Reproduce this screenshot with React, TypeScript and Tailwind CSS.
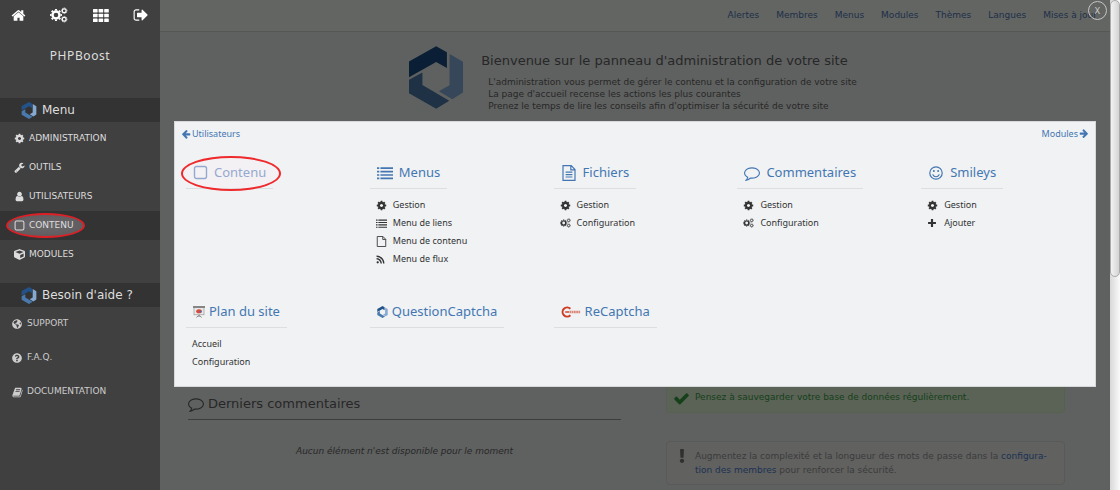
import type { ReactNode } from 'react';
import { FaCube, FaExclamation, FaGlobeAmericas, FaQuestionCircle, FaRss } from 'react-icons/fa';

type IconProps = { className?: string };

const solid = (d: string) =>
  function SolidIcon({ className = '' }: IconProps) {
    return (
      <svg viewBox="0 0 1792 1792" fill="currentColor" aria-hidden="true" className={`shrink-0 ${className}`}>
        <path d={d} />
      </svg>
    );
  };

const Home = solid(
  'M1472 992v480q0 26-19 45t-45 19h-384v-384h-256v384h-384q-26 0-45-19t-19-45v-480q0-1 .5-3t.5-3l575-474 575 474q1 2 1 6zm223-69l-62 74q-8 9-21 11h-3q-13 0-21-7l-692-577-692 577q-12 8-24 7-13-2-21-11l-62-74q-8-10-7-23.5t11-21.5l719-599q32-26 76-26t76 26l244 204v-195q0-14 9-23t23-9h192q14 0 23 9t9 23v408l219 182q10 8 11 21.5t-7 23.5z',
);
const Cog = solid(
  'M1152 896q0-106-75-181t-181-75-181 75-75 181 75 181 181 75 181-75 75-181zm512-109v222q0 12-8 23t-20 13l-185 28q-19 54-39 91 35 50 107 138 10 12 10 25t-9 23q-27 37-99 108t-94 71q-12 0-26-9l-138-108q-44 23-91 38-16 136-29 186-7 28-36 28h-222q-14 0-24.5-8.5t-11.5-21.5l-28-184q-49-16-90-37l-141 107q-10 9-25 9-14 0-25-11-126-114-165-168-7-10-7-23 0-12 8-23 15-21 51-66.5t54-70.5q-27-50-41-99l-183-27q-13-2-21-12.5t-8-23.5v-222q0-12 8-23t19-13l186-28q14-46 39-92-40-57-107-138-10-12-10-24 0-10 9-23 26-36 98.5-107.5t94.5-71.5q13 0 26 10l138 107q44-23 91-38 16-136 29-186 7-28 36-28h222q14 0 24.5 8.5t11.5 21.5l28 184q49 16 90 37l142-107q9-9 24-9 13 0 25 10 129 119 165 170 7 8 7 22 0 12-8 23-15 21-51 66.5t-54 70.5q26 50 41 98l183 28q13 2 21 12.5t8 23.5z',
);
const SignOut = solid(
  'M704 1440q0 4 1 20t.5 26.5-3 23.5-10 19.5-20.5 6.5h-320q-119 0-203.5-84.5t-84.5-203.5v-704q0-119 84.5-203.5t203.5-84.5h320q13 0 22.5 9.5t9.5 22.5q0 4 1 20t.5 26.5-3 23.5-10 19.5-20.5 6.5h-320q-66 0-113 47t-47 113v704q0 66 47 113t113 47h312l11.5 1 11.5 3 8 5.5 7 9 2 13.5zm928-544q0 26-19 45l-544 544q-19 19-45 19t-45-19-19-45v-288h-448q-26 0-45-19t-19-45v-384q0-26 19-45t45-19h448v-288q0-26 19-45t45-19 45 19l544 544q19 19 19 45z',
);
const Wrench = solid(
  'M448 1472q0-26-19-45t-45-19-45 19-19 45 19 45 45 19 45-19 19-45zm644-420l-682 682q-37 37-90 37-52 0-91-37l-106-108q-38-36-38-90 0-53 38-91l681-681q39 98 114.5 173.5t173.5 114.5zm634-435q0 39-23 106-47 134-164.5 217.5t-258.5 83.5q-185 0-316.5-131.5t-131.5-316.5 131.5-316.5 316.5-131.5q58 0 121.5 16.5t107.5 46.5q16 11 16 28t-16 28l-293 169v224l193 107q5-3 79-48.5t135.5-81 70.5-35.5q15 0 23.5 10t8.5 25z',
);
const User = solid(
  'M1536 1399q0 109-62.5 187t-150.5 78h-854q-88 0-150.5-78t-62.5-187q0-85 8.5-160.5t31.5-152 58.5-131 94-89 134.5-34.5q131 128 313 128t313-128q76 0 134.5 34.5t94 89 58.5 131 31.5 152 8.5 160.5zm-256-887q0 159-112.5 271.5t-271.5 112.5-271.5-112.5-112.5-271.5 112.5-271.5 271.5-112.5 271.5 112.5 112.5 271.5z',
);
const Book = solid(
  'M1703 478q40 57 18 129l-275 906q-19 64-76.5 107.5t-122.5 43.5h-923q-77 0-148.5-53.5t-99.5-131.5q-24-67-2-127 0-4 3-27t4-37q1-8-3-21.5t-3-19.5q2-11 8-21t16.5-23.5 16.5-23.5q23-38 45-91.5t30-91.5q3-10 .5-30t-.5-28q3-11 17-28t17-23q21-36 42-92t25-90q1-9-2.5-32t.5-28q4-13 22-30.5t22-22.5q19-26 42.5-84.5t27.5-96.5q1-8-3-25.5t-2-26.5q2-8 9-18t18-23 17-21q8-12 16.5-30.5t15-35 16-36 19.5-32 26.5-23.5 36-11.5 47.5 5.5l-1 3q38-9 51-9h761q74 0 114 56t18 130l-274 906q-36 119-71.5 153.5t-128.5 34.5h-869q-27 0-38 15-11 16-1 43 24 70 144 70h923q29 0 56-15.5t35-41.5l300-987q7-22 5-57 38 15 59 43zm-1064 2q-4 13 2 22.5t20 9.5h608q13 0 25.5-9.5t16.5-22.5l21-64q4-13-2-22.5t-20-9.5h-608q-13 0-25.5 9.5t-16.5 22.5zm-83 256q-4 13 2 22.5t20 9.5h608q13 0 25.5-9.5t16.5-22.5l21-64q4-13-2-22.5t-20-9.5h-608q-13 0-25.5 9.5t-16.5 22.5z',
);
const Comment = solid(
  'M896 384q-204 0-381.5 69.5t-282 187.5-104.5 255q0 112 71.5 213.5t201.5 175.5l87 50-27 96q-24 91-70 172 152-63 275-171l43-38 57 6q69 8 130 8 204 0 381.5-69.5t282-187.5 104.5-255-104.5-255-282-187.5-381.5-69.5zm896 512q0 174-120 321.5t-326 233-450 85.5q-70 0-145-8-198 175-460 242-49 14-114 22h-5q-15 0-27-10.5t-16-27.5v-1q-3-4-.5-12t2-10 4.5-9.5l6-9 7-8.5 8-9q7-8 31-34.5t34.5-38 31-39.5 32.5-51 27-59 26-76q-157-89-247.5-220t-90.5-281q0-174 120-321.5t326-233 450-85.5 450 85.5 326 233 120 321.5z',
);
const ArrowLeft = solid(
  'M1664 896v128q0 53-32.5 90.5t-84.5 37.5h-704l293 294q38 36 38 90t-38 90l-75 76q-37 37-90 37-52 0-91-37l-651-652q-37-37-37-90 0-52 37-91l651-650q38-38 91-38 52 0 90 38l75 74q38 38 38 91t-38 91l-293 293h704q52 0 84.5 37.5t32.5 90.5z',
);
const Check = solid(
  'M1671 566q0 40-28 68l-724 724-136 136q-28 28-68 28t-68-28l-136-136-362-362q-28-28-28-68t28-68l136-136q28-28 68-28t68 28l294 295 656-657q28-28 68-28t68 28l136 136q28 28 28 68z',
);
const List = solid(
  'M0 256h256v192H0zM384 256h1408v192H384zM0 640h256v192H0zM384 640h1408v192H384zM0 1024h256v192H0zM384 1024h1408v192H384zM0 1408h256v192H0zM384 1408h1408v192H384z',
);
const Plus = solid('M704 192h384v512h512v384h-512v512H704v-512H192V704h512z');

const gears = [
  { x: 6, y: 8, ring: 3.5, ringWidth: 2.4, teeth: 5.2, teethWidth: 1.6 },
  { x: 14.2, y: 3.8, ring: 1.9, ringWidth: 1.2, teeth: 2.8, teethWidth: 1 },
  { x: 14.2, y: 12.2, ring: 1.9, ringWidth: 1.2, teeth: 2.8, teethWidth: 1 },
];

function Cogs({ className = '' }: IconProps) {
  return (
    <svg viewBox="0 0 18 16" fill="none" stroke="currentColor" aria-hidden="true" className={`shrink-0 ${className}`}>
      {gears.map((gear) => (
        <g key={`${gear.x}-${gear.y}`}>
          <circle cx={gear.x} cy={gear.y} r={gear.ring} strokeWidth={gear.ringWidth} />
          <circle cx={gear.x} cy={gear.y} r={gear.teeth} strokeWidth={gear.teethWidth} pathLength="16" strokeDasharray="1 1" strokeDashoffset="0.5" />
        </g>
      ))}
    </svg>
  );
}

function Grid({ className = '' }: IconProps) {
  return (
    <svg viewBox="0 0 16 13" fill="currentColor" aria-hidden="true" className={className}>
      {[0, 4.7, 9.4].map((y) => [0, 5.6, 11.2].map((x) => <rect key={`${x}-${y}`} x={x} y={y} width="4.6" height="3.6" rx="0.6" />))}
    </svg>
  );
}

function Square({ className = '' }: IconProps) {
  return (
    <svg viewBox="0 0 14 14" fill="none" stroke="currentColor" strokeWidth="1.3" aria-hidden="true" className={`shrink-0 ${className}`}>
      <rect x="1.4" y="1.4" width="11.2" height="11.2" rx="1.8" />
    </svg>
  );
}

function File({ className = '' }: IconProps) {
  return (
    <svg viewBox="0 0 14 14" fill="none" stroke="currentColor" strokeWidth="1.1" aria-hidden="true" className={`shrink-0 ${className}`}>
      <path d="M1.6.6h7.2l3.6 3.6v9.2H1.6zM8.6.6v3.8h3.8" />
    </svg>
  );
}

function FileText({ className = '' }: IconProps) {
  return (
    <svg viewBox="0 0 16 16" fill="none" stroke="currentColor" strokeWidth="1.2" aria-hidden="true" className={`shrink-0 ${className}`}>
      <path d="M2 .7h8.2L14 4.5v10.8H2zM9.8.7v4.2H14M4.6 7.2h6.8M4.6 9.6h6.8M4.6 12h6.8" />
    </svg>
  );
}

function Smile({ className = '' }: IconProps) {
  return (
    <svg viewBox="0 0 16 16" fill="none" stroke="currentColor" strokeWidth="1.2" strokeLinecap="round" aria-hidden="true" className={`shrink-0 ${className}`}>
      <circle cx="8" cy="8" r="6.2" />
      <path d="M4.9 9.8c1.2 2.6 5 2.6 6.2 0" />
      <circle cx="5.9" cy="6" r="1" fill="currentColor" stroke="none" />
      <circle cx="10.1" cy="6" r="1" fill="currentColor" stroke="none" />
    </svg>
  );
}

function Board({ className = '' }: IconProps) {
  return (
    <svg viewBox="0 0 12 12" aria-hidden="true" className={`shrink-0 ${className}`}>
      <path d="M6 8v3M3.4 11.4 6 9.4l2.6 2" stroke="#8b8b8b" fill="none" />
      <rect x="1" y="1" width="10" height="7.8" fill="#e8e8e8" stroke="#9a9a9a" strokeWidth=".7" />
      <rect x="0" y="0" width="12" height="2" fill="#858585" />
      <ellipse cx="6" cy="5.3" rx="2.8" ry="2" fill="#d9493c" />
      <path d="M6 5.3 8.8 4.6 8 7z" fill="#4a6fb0" />
    </svg>
  );
}

function RedMark({ className = '' }: IconProps) {
  return (
    <svg viewBox="0 0 20 12" fill="none" stroke="#cf3a20" aria-hidden="true" className={`shrink-0 ${className}`}>
      <path d="M9.4 2.7A4.6 4.6 0 1 0 9.4 9.3" strokeWidth="2" />
      <path d="M4.2 6h4" strokeWidth="1.4" />
      <path d="M8.6 6h11" strokeWidth="2.4" strokeDasharray="1.7 .5" opacity=".6" />
    </svg>
  );
}

function Logo({ className = '', colors }: IconProps & { colors: [string, string, string] }) {
  return (
    <svg viewBox="0 0 161 186" aria-hidden="true" className={`shrink-0 ${className}`}>
      <path fill={colors[0]} d="M0 45 81 0l32 18v47L81 47 0 92z" />
      <path fill={colors[1]} d="m121 23 40 23v92l-32 20-40-24 32-18z" />
      <path fill={colors[2]} d="m0 100 40-22v37l80 47-39 24L0 140z" />
    </svg>
  );
}

const bright: [string, string, string] = ['#235388', '#86a9d2', '#4a79ad'];
const dim: [string, string, string] = ['#0a1f36', '#364759', '#1f3245'];

const mainLinks: { label: string; icon: ReactNode; active?: boolean }[] = [
  { label: 'ADMINISTRATION', icon: <Cog className="size-[11px]" /> },
  { label: 'OUTILS', icon: <Wrench className="size-[11px]" /> },
  { label: 'UTILISATEURS', icon: <User className="size-[11px]" /> },
  { label: 'CONTENU', icon: <Square className="size-[11px]" />, active: true },
  { label: 'MODULES', icon: <FaCube className="size-[11px]" /> },
];

const helpLinks = [
  { label: 'SUPPORT', icon: <FaGlobeAmericas className="size-[10px]" /> },
  { label: 'F.A.Q.', icon: <FaQuestionCircle className="size-[10px]" /> },
  { label: 'DOCUMENTATION', icon: <Book className="size-[11px]" /> },
];

const cog = <Cog className="size-[11px]" />;
const cogs = <Cogs className="h-[10px] w-[11px]" />;

type Section = {
  title: string;
  icon: ReactNode;
  small?: boolean;
  circled?: boolean;
  links: { label: string; icon?: ReactNode }[];
};

const sections: Section[] = [
  { title: 'Contenu', icon: <Square className="size-[15px]" />, circled: true, links: [] },
  {
    title: 'Menus',
    icon: <List className="size-4" />,
    links: [
      { label: 'Gestion', icon: cog },
      { label: 'Menu de liens', icon: <List className="size-[11px]" /> },
      { label: 'Menu de contenu', icon: <File className="size-[11px]" /> },
      { label: 'Menu de flux', icon: <FaRss className="size-[9px]" /> },
    ],
  },
  {
    title: 'Fichiers',
    icon: <FileText className="size-4" />,
    links: [
      { label: 'Gestion', icon: cog },
      { label: 'Configuration', icon: cogs },
    ],
  },
  {
    title: 'Commentaires',
    icon: <Comment className="size-4" />,
    links: [
      { label: 'Gestion', icon: cog },
      { label: 'Configuration', icon: cogs },
    ],
  },
  {
    title: 'Smileys',
    icon: <Smile className="size-4" />,
    links: [
      { label: 'Gestion', icon: cog },
      { label: 'Ajouter', icon: <Plus className="size-[10px]" /> },
    ],
  },
  {
    title: 'Plan du site',
    small: true,
    icon: <Board className="size-3" />,
    links: [{ label: 'Accueil' }, { label: 'Configuration' }],
  },
  { title: 'QuestionCaptcha', small: true, icon: <Logo className="h-3 w-[11px]" colors={bright} />, links: [] },
  { title: 'ReCaptcha', small: true, icon: <RedMark className="h-3 w-5" />, links: [] },
];

function SidebarTitle({ children }: { children: ReactNode }) {
  return (
    <h2 className="flex h-6 items-center gap-1 bg-[#333333] pl-5 text-xs text-[#dddddd]">
      <Logo className="h-[17px] w-[18px]" colors={bright} />
      {children}
    </h2>
  );
}

function Sidebar() {
  return (
    <aside className="w-40 shrink-0 bg-[#404040] text-[9px] text-[#dddddd]">
      <div className="flex h-[30px] items-center justify-between pr-[11px] pl-[11px] text-white">
        <a href="#accueil" aria-label="Accueil"><Home className="size-[15px]" /></a>
        <a href="#configuration" aria-label="Configuration"><Cogs className="h-4 w-[18px]" /></a>
        <a href="#modules" aria-label="Modules"><Grid className="h-[13px] w-4" /></a>
        <a href="#sortie" aria-label="Déconnexion"><SignOut className="size-4" /></a>
      </div>
      <h1 className="flex h-[68px] items-start justify-center pt-[18px] font-['Noto_Sans',sans-serif] text-xs leading-4 tracking-wider text-[#dddddd]">
        PHPBoost
      </h1>
      <nav>
        <SidebarTitle>Menu</SidebarTitle>
        <ul className="pt-[2px]">
          {mainLinks.map(({ label, icon, active }) => (
            <li key={label} className={active ? 'bg-[#333333]' : ''}>
              <a href={`#${label.toLowerCase()}`} className="relative isolate flex h-[29px] items-center pl-[14px]">
                <span className="flex w-[15px] shrink-0 items-center">{icon}</span>
                {label}
                {active && (
                  <span className="absolute inset-y-[2px] left-[6px] -z-10 w-[79px] rounded-[50%] border-2 border-[#dd1f26] bg-[radial-gradient(#6b686b,#5c595c)]" />
                )}
              </a>
            </li>
          ))}
        </ul>
      </nav>
      <nav className="mt-[14px]">
        <SidebarTitle>Besoin d'aide ?</SidebarTitle>
        <ul>
          {helpLinks.map(({ label, icon }) => (
            <li key={label}>
              <a href={`#${label.toLowerCase()}`} className="flex h-[34px] items-center pl-3 text-[#cccccc]">
                <span className="flex w-[15px] shrink-0 items-center">{icon}</span>
                {label}
              </a>
            </li>
          ))}
        </ul>
      </nav>
    </aside>
  );
}

function PanelSection({ title, icon, small, circled, links }: Section) {
  return (
    <section className="pl-[11px]">
      <h3
        className={`relative inline-flex h-8 items-center border-b border-[#dcdfe2] px-[7px] ${
          circled ? 'text-[#7b96c6]' : 'text-[#4477b2]'
        } ${small ? 'gap-1' : 'gap-[6px]'}`}
      >
        {icon}
        <span className="text-[13px]">{title}</span>
        {circled && (
          <span className="absolute -top-px -right-2 -bottom-[3px] -left-[5px] rounded-[50%] border-2 border-[#ee2a2c] bg-[#ffeef4]/20" />
        )}
      </h3>
      <ul className="mt-[7px] px-[6px]">
        {links.map((link) => (
          <li key={link.label}>
            <a href="#lien" className="flex h-[18px] items-center text-[#333333]">
              {link.icon && <span className="flex w-[17px] shrink-0 items-center">{link.icon}</span>}
              {link.label}
            </a>
          </li>
        ))}
      </ul>
    </section>
  );
}

function Panel() {
  return (
    <div
      role="dialog"
      aria-label="Contenu"
      className="absolute top-[121px] right-[14px] left-[14px] border border-[#d6d8d9] bg-[#f0f2f4] pb-[15px] font-['Noto_Sans',sans-serif] text-[9px]"
    >
      <div className="flex h-[23px] items-center justify-between px-[6px] text-[#4477b2]">
        <a href="#utilisateurs" className="flex items-center gap-px"><ArrowLeft className="size-[10px]" />Utilisateurs</a>
        <a href="#modules" className="flex items-center gap-px">Modules<ArrowLeft className="size-[10px] rotate-180" /></a>
      </div>
      <div className="grid grid-cols-5 gap-y-7 pt-3 pr-px">
        {sections.map((section) => (
          <PanelSection key={section.title} {...section} />
        ))}
      </div>
    </div>
  );
}

function Content() {
  return (
    <main className="relative min-w-0 flex-1 bg-[#5f6160] text-[9px] text-[#272727]">
      <nav className="flex h-8 items-center justify-end gap-[17px] border-b border-[#555756] bg-[#636563] pr-[13px] text-[#1d2f48]">
        {['Alertes', 'Membres', 'Menus', 'Modules', 'Thèmes', 'Langues', 'Mises à jour'].map((item) => (
          <a key={item} href={`#${item}`}>{item}</a>
        ))}
      </nav>
      <button
        type="button"
        className="absolute top-px right-[3px] flex size-[19px] items-center justify-center rounded-full border border-[#c4c4c4] font-['Noto_Sans',sans-serif] text-[9px] text-[#d0d0d0]"
      >
        X
      </button>
      <header className="flex h-[349px] items-start justify-center gap-[18px] pt-[14px] pr-1">
        <Logo className="h-[63px] w-[54px]" colors={dim} />
        <div className="pt-[6px]">
          <h2 className="text-[13px] leading-[18px]">Bienvenue sur le panneau d'administration de votre site</h2>
          <p className="mt-[6px] pl-[7px] leading-3">
            L'administration vous permet de gérer le contenu et la configuration de votre site
            <br />
            La page d'accueil recense les actions les plus courantes
            <br />
            Prenez le temps de lire les conseils afin d'optimiser la sécurité de votre site
          </p>
        </div>
      </header>
      <div className="flex gap-[45px] pr-[45px] pl-7">
        <section className="min-w-0 flex-[433]">
          <h2 className="flex h-[39px] items-center gap-1 border-b border-[#3c3d3d] pt-2 text-[13px]">
            <Comment className="size-4" />
            Derniers commentaires
          </h2>
          <p className="pt-[25px] text-center leading-3 italic">Aucun élément n'est disponible pour le moment</p>
        </section>
        <section className="min-w-0 flex-[399]">
          <div className="flex h-8 items-center gap-[5px] rounded-b-sm border border-[#56614f] bg-[#5a6356] pt-[2px] pl-[6px] text-[#16401a]">
            <Check className="size-[17px]" />
            <p>Pensez à sauvegarder votre base de données régulièrement.</p>
          </div>
          <div className="mt-7 flex gap-[9px] rounded-sm border border-[#585a59] bg-[#616160] py-[7px] pr-2 pl-[11px] text-[#3b3b3b]">
            <FaExclamation className="h-[14px] w-2 shrink-0 text-[#303030]" />
            <p className="min-w-0 flex-1 leading-[14px]">
              Augmentez la complexité et la longueur des mots de passe dans la{' '}
              <a href="#membres" className="text-[#1b3253]">{'configura\u00adtion des membres'}</a> pour renforcer la sécurité.
            </p>
          </div>
        </section>
      </div>
      <Panel />
    </main>
  );
}

export default function App() {
  return (
    <div className="flex h-screen overflow-hidden font-['DejaVu_Sans',sans-serif]">
      <Sidebar />
      <Content />
      <div className="w-[10px] shrink-0 bg-linear-to-r from-[#d8d8d8] to-[#fafafa]">
        <div className="h-[277px] rounded-full border border-[#aaaaaa] bg-linear-to-r from-[#f2f2f2] to-[#d4d4d4]" />
      </div>
    </div>
  );
}
